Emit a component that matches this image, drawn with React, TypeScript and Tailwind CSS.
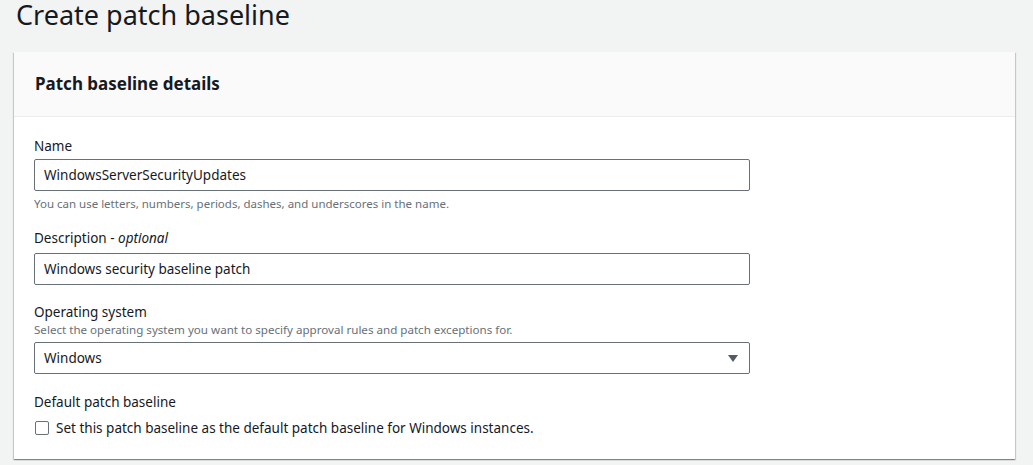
import { useState } from 'react'

const font = { fontFamily: '"Noto Sans", "Open Sans", Arial, sans-serif' }

function Field({
  label,
  optional,
  hint,
  children,
  className = '',
}: {
  label: string
  optional?: boolean
  hint?: string
  children: React.ReactNode
  className?: string
}) {
  return (
    <div className={className}>
      <div className="h-[20px] text-[13.5px] leading-[20px] text-[#16191f]">
        {label}
        {optional && (
          <>
            {' - '}
            <i>optional</i>
          </>
        )}
      </div>
      {hint && <div className="h-[16px] text-[11.6px] leading-[16px] text-[#687078]">{hint}</div>}
      {children}
    </div>
  )
}

export default function App() {
  const [name, setName] = useState('WindowsServerSecurityUpdates')
  const [desc, setDesc] = useState('Windows security baseline patch')
  const [isDefault, setIsDefault] = useState(false)

  return (
    <div className="min-h-[465px] w-[1033px] bg-[#f2f3f3] text-[#16191f]" style={font}>
      <h1 className="h-[30px] pl-[16px] text-[27px] font-normal leading-[30px] text-[#16191f]">
        Create patch baseline
      </h1>

      <div className="ml-[14px] mt-[22px] w-[1001px] bg-white shadow-[0_1px_1px_0_rgba(0,28,36,0.3),1px_1px_1px_0_rgba(0,28,36,0.15),-1px_1px_1px_0_rgba(0,28,36,0.15)]">
        <div className="flex h-[65px] items-center border-b border-[#eaeded] bg-[#fafafa] px-[21px]">
          <h2 className="text-[17px] font-bold text-[#16191f]">Patch baseline details</h2>
        </div>

        <div className="px-[20px] pb-[23px] pt-[19px]">
          <Field label="Name">
            <input
              value={name}
              onChange={(e) => setName(e.target.value)}
              className="mt-[3px] block h-[32px] w-[716px] rounded-[2px] border border-[#687078] px-[9px] text-[13.5px] text-[#16191f] outline-none"
            />
            <div className="mt-[5px] h-[16px] text-[11.5px] leading-[16px] text-[#687078]">
              You can use letters, numbers, periods, dashes, and underscores in the name.
            </div>
          </Field>

          <Field label="Description" optional className="mt-[16px]">
            <input
              value={desc}
              onChange={(e) => setDesc(e.target.value)}
              className="mt-[5px] block h-[32px] w-[716px] rounded-[2px] border border-[#687078] px-[9px] text-[13.5px] text-[#16191f] outline-none"
            />
          </Field>

          <Field
            label="Operating system"
            hint="Select the operating system you want to specify approval rules and patch exceptions for."
            className="mt-[17px]"
          >
            <div className="mt-[4px] flex h-[32px] w-[716px] items-center justify-between rounded-[2px] border border-[#687078] pl-[9px] pr-[11px] text-[13.5px]">
              <span>Windows</span>
              <svg width="10" height="7" viewBox="0 0 10 7">
                <path d="M0 0h10L5 7z" fill="#545b64" />
              </svg>
            </div>
          </Field>

          <Field label="Default patch baseline" className="mt-[18px]">
            <label className="mt-[8px] flex cursor-pointer items-center gap-[7px] pl-[1px]">
              <span
                onClick={() => setIsDefault(!isDefault)}
                className={`flex h-[14px] w-[14px] items-center justify-center rounded-[2px] border border-[#687078] ${
                  isDefault ? 'bg-[#0073bb]' : 'bg-white'
                }`}
              />
              <span className="text-[13.5px] leading-[16px] text-[#16191f]">
                Set this patch baseline as the default patch baseline for Windows instances.
              </span>
            </label>
          </Field>
        </div>
      </div>
    </div>
  )
}
